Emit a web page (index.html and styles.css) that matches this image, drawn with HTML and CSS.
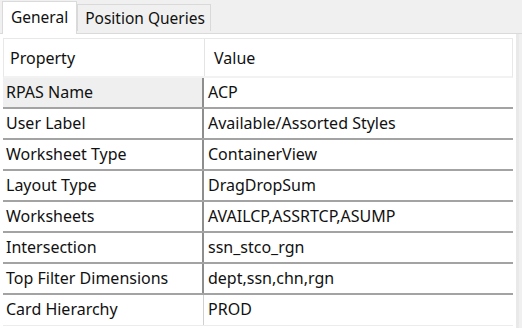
FILE: index.html
```html
<!DOCTYPE html>
<html>
<head>
<meta charset="utf-8">
<link rel="stylesheet" href="styles.css">
</head>
<body>
<div class="tabs">
  <div class="tab active">General</div>
  <div class="tab">Position Queries</div>
</div>
<div class="panel">
  <div class="grid">
    <div class="row head"><div class="c1">Property</div><div class="c2">Value</div></div>
    <div class="row cur"><div class="c1">RPAS Name</div><div class="c2">ACP</div></div>
    <div class="row"><div class="c1">User Label</div><div class="c2">Available/Assorted Styles</div></div>
    <div class="row"><div class="c1">Worksheet Type</div><div class="c2">ContainerView</div></div>
    <div class="row"><div class="c1">Layout Type</div><div class="c2">DragDropSum</div></div>
    <div class="row"><div class="c1">Worksheets</div><div class="c2">AVAILCP,ASSRTCP,ASUMP</div></div>
    <div class="row"><div class="c1">Intersection</div><div class="c2">ssn_stco_rgn</div></div>
    <div class="row"><div class="c1">Top Filter Dimensions</div><div class="c2">dept,ssn,chn,rgn</div></div>
    <div class="row last"><div class="c1">Card Hierarchy</div><div class="c2">PROD</div></div>
  </div>
</div>
</body>
</html>
```

FILE: styles.css
```css
html, body {
  margin: 0;
  padding: 0;
  background: #f0f0f0;
  font-family: "Noto Sans", "DejaVu Sans", sans-serif;
  color: #111;
}
body {
  width: 522px;
  height: 328px;
  overflow: hidden;
}
.tabs {
  display: flex;
  align-items: flex-end;
  height: 34px;
  padding-left: 2px;
  border-bottom: 1px solid #dadada;
  box-sizing: border-box;
}
.tab {
  font-size: 15.5px;
  height: 27px;
  line-height: 26px;
  padding: 0 5px 0 7px;
  border: 1px solid #d9d9d9;
  border-bottom: none;
  box-sizing: border-box;
  background: #f0f0f0;
  margin-bottom: 2px;
}
.tab.active {
  background: #fff;
  height: 33px;
  line-height: 30px;
  padding: 0 8px 0 8px;
  margin-bottom: -1px;
  border-color: #dadada;
  position: relative;
}
.panel {
  background: #fff;
  height: 294px;
  width: 519px;
  padding: 4px 0 0 3px;
  box-sizing: border-box;
  border-right: 3px solid #e9e9e9;
}
.grid {
  width: 510px;
  display: flex;
  flex-direction: column;
}
.row {
  display: grid;
  grid-template-columns: 201px 1fr;
  height: 31px;
  border-bottom: 2px solid #a3a3a3;
  box-sizing: border-box;
  font-size: 16px;
}
.row > div {
  display: flex;
  align-items: center;
  padding-left: 3px;
  padding-bottom: 2px;
  white-space: nowrap;
}
.row .c1 {
  border-right: 2px solid #8e8e8e;
}
.row .c2 {
  padding-left: 4px;
}
.row.head {
  height: 40px;
  border: 1px solid #e8e8e8;
  border-bottom: 2px solid #f2f2f2;
}
.row.head > div {
  padding-bottom: 0;
}
.row.head .c1 {
  padding-left: 6px;
  border-right: 1px solid #e4e4e4;
}
.row.head .c2 {
  padding-left: 9px;
}
.row.cur .c1 {
  background: #efefef;
}
.row.last {
  border-bottom: 1px solid #ececec;
}
.row.last .c1 {
  border-right: 1px solid #d0d0d0;
}
```
